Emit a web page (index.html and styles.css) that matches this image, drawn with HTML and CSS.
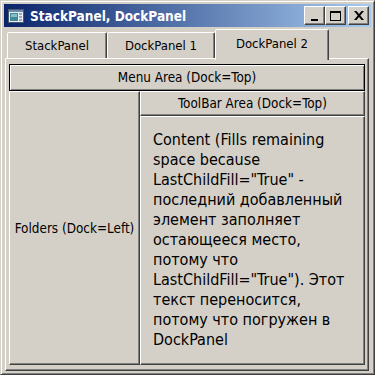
FILE: index.html
```html
<!DOCTYPE html>
<html lang="ru">
<head>
    <meta charset="UTF-8">
    <title>StackPanel, DockPanel</title>
    <link rel="stylesheet" href="styles.css">
</head>
<body>

    <div class="window">
        <div class="titlebar">
            <svg class="app-icon" width="16" height="14" viewBox="0 0 16 14">
                <rect x="0.5" y="0.5" width="15" height="13" fill="#e8eef4" stroke="#4a5a6a"/>
                <rect x="1" y="1" width="14" height="2" fill="#6a8aa8"/>
                <rect x="2" y="4" width="8" height="8" fill="#3f8a96"/>
                <rect x="3" y="5" width="6" height="3" fill="#7fc0c8"/>
                <rect x="11" y="4" width="3" height="2" fill="#9aa8b4"/>
                <rect x="11" y="7" width="3" height="2" fill="#9aa8b4"/>
                <rect x="11" y="10" width="3" height="2" fill="#9aa8b4"/>
            </svg>
            <span class="title">StackPanel, DockPanel</span>
            <div class="caption-buttons">
                <div class="caption-btn">
                    <svg width="10" height="10" viewBox="0 0 10 10"><rect x="1" y="8" width="7" height="2" fill="#000"/></svg>
                </div>
                <div class="caption-btn">
                    <svg width="11" height="10" viewBox="0 0 11 10"><path d="M0 0H11V10H0Z M1 2V9H10V2Z" fill="#000" fill-rule="evenodd"/></svg>
                </div>
                <div class="caption-btn close">
                    <svg width="10" height="9" viewBox="0 0 10 9"><path d="M0 0H2.5L5 3L7.5 0H10L6.3 4.5L10 9H7.5L5 6L2.5 9H0L3.7 4.5Z" fill="#000"/></svg>
                </div>
            </div>
        </div>

        <div class="client">
            <div class="tabs">
                <div class="tab">StackPanel</div>
                <div class="tab">DockPanel 1</div>
                <div class="tab selected">DockPanel 2</div>
            </div>
            <div class="tab-panel">
                <div class="dock">
                    <div class="btn menu">Menu Area (Dock=Top)</div>
                    <div class="dock-body">
                        <div class="btn folders">Folders (Dock=Left)</div>
                        <div class="side">
                            <div class="btn toolbar">ToolBar Area (Dock=Top)</div>
                            <div class="btn content">Content (Fills remaining space because LastChildFill="True" - последний добавленный элемент заполняет остающееся место, потому что LastChildFill="True"). Этот текст переносится, потому что погружен в DockPanel</div>
                        </div>
                    </div>
                </div>
            </div>
        </div>
    </div>

</body>
</html>
```

FILE: styles.css
```css
* {
    box-sizing: border-box;
}

body {
    margin: 0;
    font-family: "DejaVu Sans Condensed", "DejaVu Sans", sans-serif;
    font-stretch: condensed;
    background-color: #d4d0c8;
    color: #000;
}

.window {
    width: 375px;
    height: 375px;
    display: flex;
    flex-direction: column;
    background-color: #d4d0c8;
    border: 1px solid;
    border-color: #d4d0c8 #404040 #404040 #d4d0c8;
    box-shadow: inset 1px 1px #fff, inset -1px -1px #808080;
    padding: 3px;
}

.titlebar {
    height: 23px;
    display: flex;
    align-items: center;
    padding: 0 2px 0 4px;
    background: linear-gradient(to right, #0a246a, #a6caf0);
}

.app-icon {
    margin-right: 6px;
    flex-shrink: 0;
}

.title {
    flex: 1;
    color: #fff;
    font-weight: bold;
    font-size: 13.5px;
    white-space: nowrap;
}

.caption-buttons {
    display: flex;
}

.caption-btn {
    width: 21px;
    height: 19px;
    display: flex;
    align-items: center;
    justify-content: center;
    background-color: #d4d0c8;
    border: 1px solid;
    border-color: #fff #404040 #404040 #fff;
    box-shadow: inset -1px -1px #808080;
}

.caption-btn.close {
    margin-left: 2px;
}

.client {
    flex: 1;
    display: flex;
    flex-direction: column;
    padding: 2px 2px 0 1px;
}

.tabs {
    height: 31px;
    display: flex;
    align-items: flex-end;
    padding-left: 2px;
    margin-bottom: -2px;
    position: relative;
    z-index: 1;
}

.tab {
    height: 26px;
    margin-bottom: 2px;
    padding: 0 17px;
    display: flex;
    align-items: center;
    justify-content: center;
    font-size: 13px;
    white-space: nowrap;
    background-color: #d4d0c8;
    border: 1px solid;
    border-bottom: none;
    border-color: #fff #404040 transparent #fff;
    border-radius: 2px 2px 0 0;
    box-shadow: inset -1px 0 #808080;
}

.tab.selected {
    height: 31px;
    margin-bottom: 0;
    padding: 0 20px 3px;
}

.tab-panel {
    flex: 1;
    border: 1px solid;
    border-color: #fff #404040 #404040 #fff;
    box-shadow: inset -1px -1px #808080;
    padding: 5px 3px;
}

.dock {
    height: 100%;
    display: flex;
    flex-direction: column;
}

.btn {
    display: flex;
    align-items: center;
    justify-content: center;
    font-size: 13.4px;
    border: 1px solid;
    border-color: #fff #404040 #404040 #fff;
    box-shadow: inset -1px -1px #808080;
}

.menu {
    height: 27px;
    border-color: #000;
    box-shadow: inset 1px 1px #fff, inset -1px -1px #808080;
}

.dock-body {
    flex: 1;
    display: flex;
}

.folders {
    width: 131px;
}

.side {
    flex: 1;
    display: flex;
    flex-direction: column;
}

.toolbar {
    height: 25px;
}

.content {
    flex: 1;
    display: block;
    padding: 13px 12px 0 12px;
    font-size: 16px;
    line-height: 20px;
}
```
